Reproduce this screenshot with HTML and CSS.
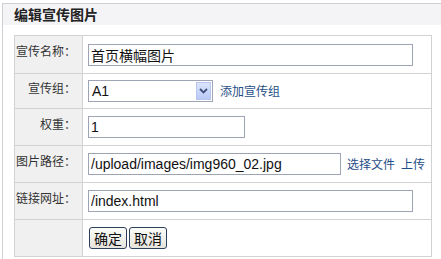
FILE: index.html
```html
<!DOCTYPE html>
<html lang="zh-CN">
<head>
  <meta charset="UTF-8">
  <title>编辑宣传图片</title>
  <link rel="stylesheet" href="styles.css">
</head>
<body>
  <div class="panel">
    <div class="panel-titulo">编辑宣传图片</div>
    <div class="panel-cuerpo">
      <table class="formulario">
        <tr class="fila-1">
          <th>宣传名称：</th>
          <td><input class="campo campo-largo" type="text" value="首页横幅图片"></td>
        </tr>
        <tr class="fila-2">
          <th>宣传组：</th>
          <td>
            <div class="linea">
              <div class="selector">
                <span class="selector-valor">A1</span>
                <span class="selector-flecha">
                  <svg width="9" height="6" viewBox="0 0 9 6"><path d="M1 1 L4.5 4.5 L8 1" fill="none" stroke="#3d4f7c" stroke-width="1.8"/></svg>
                </span>
              </div>
              <a href="#" class="enlace">添加宣传组</a>
            </div>
          </td>
        </tr>
        <tr class="fila-3">
          <th>权重：</th>
          <td><input class="campo campo-corto" type="text" value="1"></td>
        </tr>
        <tr class="fila-4">
          <th>图片路径：</th>
          <td>
            <div class="linea">
              <input class="campo campo-medio" type="text" value="/upload/images/img960_02.jpg">
              <a href="#" class="enlace">选择文件</a>
              <a href="#" class="enlace">上传</a>
            </div>
          </td>
        </tr>
        <tr class="fila-5">
          <th>链接网址：</th>
          <td><input class="campo campo-largo" type="text" value="/index.html"></td>
        </tr>
        <tr class="fila-6">
          <th></th>
          <td>
            <div class="botones">
              <button type="button" class="boton">确定</button>
              <button type="button" class="boton">取消</button>
            </div>
          </td>
        </tr>
      </table>
    </div>
  </div>
</body>
</html>
```

FILE: styles.css
```css
html, body {
  margin: 0;
  padding: 0;
  overflow: hidden;
  background: #fff;
  font-family: "Noto Sans CJK SC", "Liberation Sans", sans-serif;
  font-size: 12px;
  line-height: 16px;
  color: #333;
}

.panel {
  margin: 3px 0 0 2px;
  width: 470px;
  border: 1px solid #cfcfd6;
  border-right: none;
  height: 300px;
}

.panel-titulo {
  height: 21px;
  line-height: 21px;
  padding-left: 11px;
  background: #f4f4f6;
  font-size: 14px;
  font-weight: bold;
  color: #222;
}

.panel-cuerpo {
  padding: 10px 0 0 11px;
}

.formulario {
  width: 418px;
  border-collapse: collapse;
  border: 1px solid #cacaca;
}

.formulario th,
.formulario td {
  box-sizing: border-box;
  border: 1px solid #d2d2d2;
  padding: 0 0 0 5px;
  vertical-align: middle;
}

.formulario th {
  width: 68px;
  padding: 0 6px 7px 0;
  background: #f0f0f0;
  text-align: right;
  font-weight: normal;
  color: #333;
  white-space: nowrap;
}

.fila-1 { height: 38px; }
.fila-2 { height: 35px; }
.fila-3 { height: 37px; }
.fila-4 { height: 37px; }
.fila-5 { height: 37px; }
.fila-6 { height: 37px; }

.campo {
  box-sizing: border-box;
  height: 22px;
  margin: 0;
  padding: 0 2px;
  border: 1px solid #9ea4b3;
  font-family: "Liberation Sans", "Noto Sans CJK SC", sans-serif;
  font-size: 14px;
  color: #111;
  background: #fff;
  display: block;
}

.campo-largo { width: 325px; }
.campo-corto { width: 157px; }
.campo-medio { width: 253px; }

.linea {
  display: flex;
  align-items: center;
  gap: 6px;
}

.selector {
  box-sizing: border-box;
  width: 125px;
  height: 22px;
  border: 1px solid #9ea4b3;
  display: flex;
  align-items: center;
  margin-right: 1px;
}

.selector-valor {
  flex: 1;
  padding-left: 3px;
  font-family: "Liberation Sans", sans-serif;
  font-size: 14px;
  color: #111;
}

.selector-flecha {
  width: 15px;
  height: 18px;
  margin-right: 1px;
  border: 1px solid #b7c6ee;
  box-sizing: border-box;
  background: linear-gradient(#dbe4fc, #b8c9f6);
  display: flex;
  align-items: center;
  justify-content: center;
}

.enlace {
  color: #1f4e86;
  text-decoration: none;
  font-size: 12px;
}

.botones {
  display: flex;
  gap: 2px;
  padding-left: 1px;
}

.boton {
  box-sizing: border-box;
  height: 22px;
  padding: 0 4px;
  border: 1px solid #2c3f5c;
  border-radius: 3px;
  background: linear-gradient(#fbfbf8, #e6e4dc);
  font-family: "Noto Sans CJK SC", sans-serif;
  font-size: 14px;
  line-height: 18px;
  color: #111;
}
```
